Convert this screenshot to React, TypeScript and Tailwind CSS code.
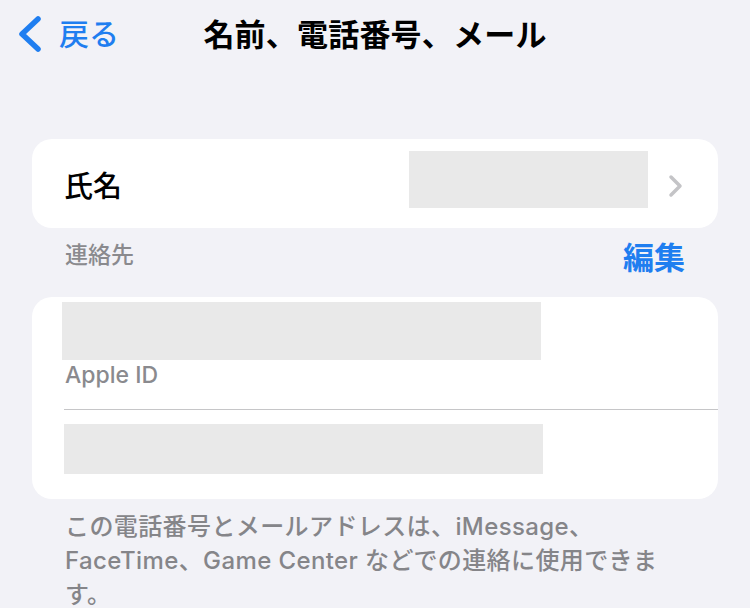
const font = "font-['Inter','Noto_Sans_CJK_JP',sans-serif]";

function BackChevron() {
  return (
    <svg width="26" height="38" viewBox="0 0 26 38" fill="none">
      <polyline
        points="21,4 5,19 21,34"
        stroke="#1f7ef0"
        strokeWidth="5.5"
        strokeLinecap="round"
        strokeLinejoin="round"
      />
    </svg>
  );
}

function RowChevron() {
  return (
    <svg width="16" height="24" viewBox="0 0 16 24" fill="none">
      <polyline
        points="3,3 12,12 3,21"
        stroke="#c4c4c7"
        strokeWidth="3.5"
        strokeLinecap="round"
        strokeLinejoin="round"
      />
    </svg>
  );
}

export default function App() {
  return (
    <div className={`w-[750px] h-[608px] overflow-hidden bg-[#f2f2f7] ${font}`}>
      {/* Nav bar */}
      <div className="grid grid-cols-[1fr_auto_1fr] items-center h-[68px]">
        <div className="flex items-center gap-[16px] pl-[17px]">
          <BackChevron />
          <span className="text-[30px] leading-none font-medium text-[#1f7ef0]">戻る</span>
        </div>
        <h1 className="text-[31px] font-bold leading-none text-black tracking-[0.2px]">
          名前、電話番号、メール
        </h1>
        <div />
      </div>

      {/* Name card */}
      <div className="mx-[32px] mt-[71px] h-[89px] rounded-[20px] bg-white flex items-center pl-[32px] pr-[34px]">
        <span className="flex-1 pt-[5px] text-[29px] leading-none font-medium text-black">氏名</span>
        <div className="self-start mt-[12px] w-[239px] h-[57px] bg-[#e9e9e9]" />
        <div className="ml-[20px] pt-[4px]">
          <RowChevron />
        </div>
      </div>

      {/* Section header */}
      <div className="flex items-start justify-between pl-[65px] pr-[65px] mt-[11px] h-[58px]">
        <span className="text-[23px] leading-[32px] font-medium text-[#8a8a8e]">連絡先</span>
        <span className="text-[31px] leading-[38px] font-bold text-[#1f7ef0]">編集</span>
      </div>

      {/* Contacts card */}
      <div className="mx-[32px] h-[202px] rounded-[20px] bg-white overflow-hidden">
        <div className="ml-[30px] mt-[5px] w-[479px] h-[58px] bg-[#e9e9e9]" />
        <div className="pl-[33px] text-[23px] leading-[30px] font-medium text-[#8a8a8e] h-[49px]">Apple ID</div>
        <div className="ml-[32px] border-t border-[#c6c6c8]" />
        <div className="ml-[32px] mt-[14px] w-[479px] h-[50px] bg-[#e9e9e9]" />
      </div>

      {/* Footer note */}
      <p className="w-[600px] ml-[65px] mt-[11px] text-[24px] leading-[34px] tracking-[0.4px] font-medium text-[#858589]">
        この電話番号とメールアドレスは、iMessage、FaceTime、Game Center などでの連絡に使用できます。
      </p>
    </div>
  );
}
